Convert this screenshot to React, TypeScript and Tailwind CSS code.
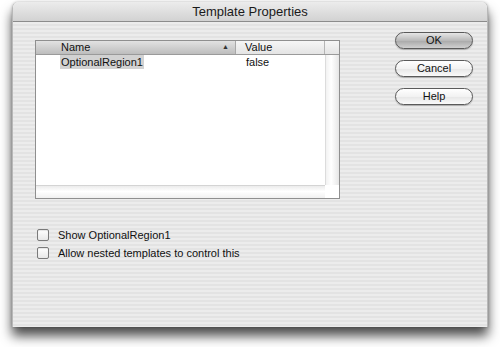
import React from "react";

const stripes =
  "bg-[repeating-linear-gradient(180deg,#ececec_0px,#ececec_2px,#e3e3e3_2px,#e3e3e3_4px)]";

function PillButton({ label, primary }: { label: string; primary?: boolean }) {
  return (
    <button
      className={`w-[78px] h-[17px] rounded-full border border-[#5a5a5a] text-[11px] leading-none text-[#111] flex items-center justify-center shadow-[0_1px_1px_rgba(0,0,0,0.25)] ${
        primary
          ? "bg-[linear-gradient(180deg,#e6e6e6_0%,#b9b9b9_50%,#a8a8a8_51%,#d0d0d0_100%)]"
          : "bg-[linear-gradient(180deg,#ffffff_0%,#f2f2f2_50%,#e6e6e6_51%,#fafafa_100%)]"
      }`}
    >
      {label}
    </button>
  );
}

function CheckRow({ label }: { label: string }) {
  return (
    <label className="flex items-center gap-[9px] h-[18px]">
      <span className="w-[12px] h-[12px] rounded-[2px] border border-[#7a7a7a] bg-[linear-gradient(180deg,#ffffff,#e8e8e8)] shadow-[inset_0_1px_1px_rgba(0,0,0,0.1)]" />
      <span className="text-[11px] text-[#111]">{label}</span>
    </label>
  );
}

export default function App() {
  return (
    <div
      className="w-[500px] h-[347px] bg-white overflow-hidden pt-[2px] pl-[12px]"
      style={{ fontFamily: '"Liberation Sans", Arial, sans-serif' }}
    >
      {/* Window */}
      <div className="w-[476px] h-[325px] rounded-t-[6px] flex flex-col overflow-hidden shadow-[0_9px_12px_rgba(0,0,0,0.7),0_0_3px_rgba(0,0,0,0.25)] border-x border-[#b8b8b8]">
        {/* Title bar */}
        <div className="h-[20px] shrink-0 bg-[linear-gradient(180deg,#ececec,#d2d2d2)] border-b border-[#8c8c8c] flex items-center justify-center">
          <span className="text-[13px] text-[#1a1a1a]">Template Properties</span>
        </div>

        {/* Body */}
        <div className={`flex-1 ${stripes} flex`}>
          <div className="pl-[22px] pt-[18px] flex flex-col">
            {/* Table */}
            <div className="w-[305px] h-[159px] border border-[#8f8f8f] bg-white flex flex-col">
              {/* Header */}
              <div className="h-[14px] flex border-b border-[#9a9a9a] text-[11px] text-[#111] shrink-0">
                <div className="w-[200px] flex items-center justify-between pl-[25px] pr-[6px] bg-[linear-gradient(180deg,#e2e2e2,#bdbdbd)] border-r border-[#a8a8a8]">
                  <span>Name</span>
                  <span className="text-[7px] text-[#333]">▲</span>
                </div>
                <div className="w-[89px] flex items-center pl-[9px] bg-[linear-gradient(180deg,#f6f6f6,#e4e4e4)] border-r border-[#b5b5b5]">
                  <span>Value</span>
                </div>
                <div className="flex-1 bg-[linear-gradient(180deg,#f6f6f6,#e4e4e4)]" />
              </div>
              {/* Rows + vertical scrollbar */}
              <div className="flex flex-1 min-h-0">
                <div className="flex-1">
                  <div className="h-[14px] flex items-center text-[11px] text-[#111]">
                    <div className="w-[201px] pl-[24px]">
                      <span className="bg-[#d2d2d2] px-[1px] py-[1px]">OptionalRegion1</span>
                    </div>
                    <span className="pl-[9px]">false</span>
                  </div>
                </div>
                <div className="w-[14px] border-l border-[#dcdcdc] bg-[linear-gradient(90deg,#f2f2f2,#ffffff_40%,#e6e6e6)]" />
              </div>
              {/* Horizontal scrollbar */}
              <div className="h-[13px] flex shrink-0">
                <div className="flex-1 border-t border-[#d4d4d4] bg-[linear-gradient(180deg,#ececec,#ffffff_45%,#f0f0f0)]" />
                <div className="w-[14px] bg-white" />
              </div>
            </div>

            {/* Checkboxes */}
            <div className="mt-[27px] ml-[2px] flex flex-col">
              <CheckRow label="Show OptionalRegion1" />
              <CheckRow label="Allow nested templates to control this" />
            </div>
          </div>

          {/* Buttons */}
          <div className="ml-auto mr-[14px] pt-[10px] flex flex-col gap-[11px]">
            <PillButton label="OK" primary />
            <PillButton label="Cancel" />
            <PillButton label="Help" />
          </div>
        </div>
      </div>
    </div>
  );
}
